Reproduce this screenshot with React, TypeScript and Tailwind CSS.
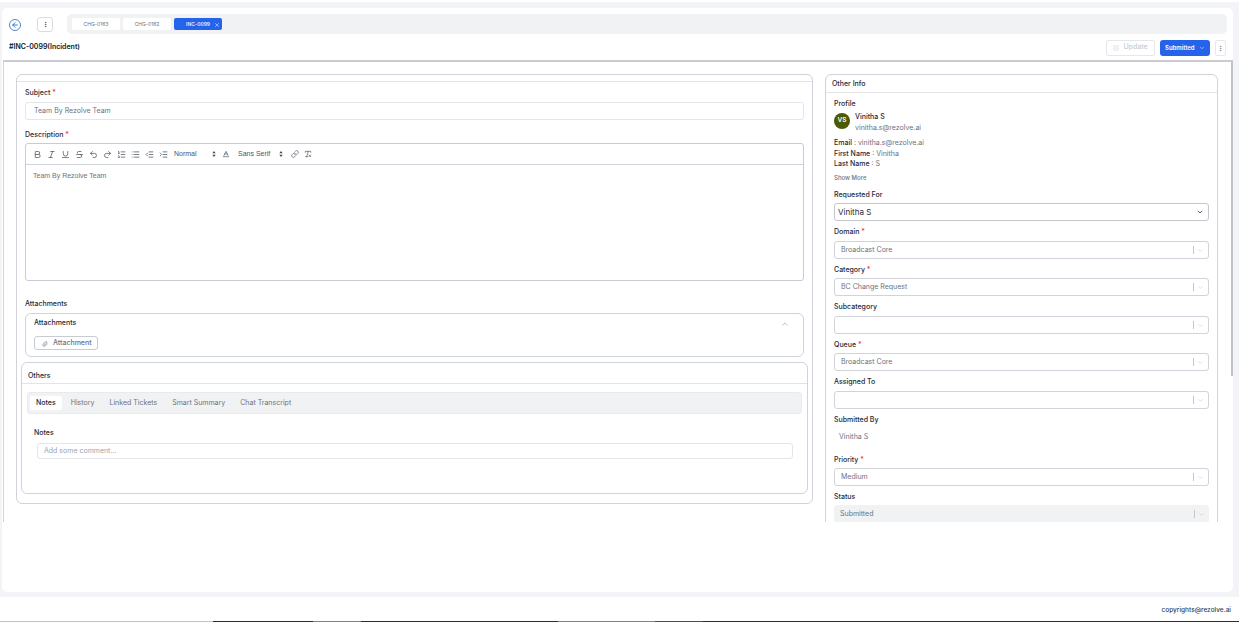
import React from 'react';
import {
  ArrowLeft,
  Bold,
  ChevronDown,
  ChevronUp,
  Baseline,
  EllipsisVertical,
  IndentDecrease,
  IndentIncrease,
  Italic,
  Link,
  List,
  ListOrdered,
  Paperclip,
  Redo2,
  RemoveFormatting,
  SquarePen,
  Strikethrough,
  Underline,
  Undo2,
  X,
} from 'lucide-react';

const Req = () => <span className="text-red-500"> *</span>;

const Label = ({ text, required }: { text: string; required?: boolean }) => (
  <div className="h-[11px] text-[7px] leading-[11px] font-medium text-[#1f2937]">
    {text}
    {required && <Req />}
  </div>
);

// react-select looking control
const SelectBox = ({ value, disabled, tall }: { value?: string; disabled?: boolean; tall?: boolean }) => (
  <div
    className={`flex h-[18px] items-center justify-between rounded-[3px] pl-[6px] pr-[4px] ${tall ? 'mt-[4px]' : 'mt-[3px]'} ${
      disabled ? 'bg-[#f1f2f4]' : 'border border-[#d1d3da] bg-white'
    }`}
  >
    <span className="text-[7px] text-[#6b7280]">{value}</span>
    <span className="flex items-center gap-[3px]">
      <span className="h-[8px] w-px bg-[#c4c6cc]" />
      <ChevronDown className="h-[7px] w-[7px] text-[#c4c6cc]" />
    </span>
  </div>
);

const Field = ({ label, required, value, tall, disabled }: { label: string; required?: boolean; value?: string; tall?: boolean; disabled?: boolean }) => (
  <div className="mt-[5px]">
    <Label text={label} required={required} />
    <SelectBox value={value} tall={tall} disabled={disabled} />
  </div>
);

const PickerArrows = () => (
  <svg viewBox="0 0 8 8" className="h-[8px] w-[8px] text-[#374151]" fill="currentColor">
    <path d="M4 1 5.6 3.2H2.4Z" />
    <path d="M4 7 5.6 4.8H2.4Z" />
  </svg>
);

const tools = [Bold, Italic, Underline, Strikethrough, Undo2, Redo2, ListOrdered, List, IndentDecrease, IndentIncrease];

const Toolbar = () => (
  <div className="flex h-[21px] items-center border-b border-[#d1d3da] pl-[7px] font-['Liberation_Sans',sans-serif] text-[7px] text-[#4b5563]">
    <div className="flex gap-[5px]">
      {tools.map((Icon, i) => (
        <Icon key={i} className="h-[9px] w-[9px] text-[#4b5563]" strokeWidth={2} />
      ))}
    </div>
    <span className="ml-[6px] w-[36px]">Normal</span>
    <PickerArrows />
    <Baseline className="ml-[4px] h-[8px] w-[8px] text-[#4b5563]" />
    <span className="ml-[8px] w-[39px] whitespace-nowrap">Sans Serif</span>
    <PickerArrows />
    <Link className="ml-[6px] h-[8px] w-[8px] text-[#4b5563]" />
    <RemoveFormatting className="ml-[5px] h-[8px] w-[8px] text-[#4b5563]" />
  </div>
);

const tabs = ['Notes', 'History', 'Linked Tickets', 'Smart Summary', 'Chat Transcript'];

const LeftPanel = () => (
  <div className="h-[430px] w-[797px] shrink-0 rounded-[6px] border border-[#d1d3da] bg-white">
    <div className="h-[7px] border-b border-[#e1e3e8]" />
    <div className="px-[8px] pt-[5px]">
      <Label text="Subject" required />
      <div className="mt-[4px] flex h-[18px] items-center rounded-[3px] border border-[#e3e5ea] pl-[8px] pt-[1px] text-[7px] text-[#6b7280]">
        Team By Rezolve Team
      </div>
      <div className="mt-[9px]">
        <Label text="Description" required />
      </div>
      <div className="mt-[3px] h-[138px] rounded-[3px] border border-[#c9cbd2]">
        <Toolbar />
        <div className="pl-[7px] pt-[6px] font-['Liberation_Sans',sans-serif] text-[7px] text-[#6b7280]">Team By Rezolve Team</div>
      </div>
      <div className="mt-[17px]">
        <Label text="Attachments" />
      </div>
      <div className="mt-[4px] h-[44px] rounded-[6px] border border-[#d1d3da] px-[8px]">
        <div className="flex h-[19px] items-center justify-between pr-[6px] text-[7px] font-medium text-[#1f2937]">
          Attachments
          <ChevronUp className="h-[8px] w-[8px] text-[#9ca3af]" />
        </div>
        <div className="mt-[3px] flex h-[14px] w-[64px] items-center gap-[5px] rounded-[3px] border border-[#c9cbd2] pl-[7px] pt-[1px] text-[7px] font-medium text-[#6b7280]">
          <Paperclip className="h-[6px] w-[6px] text-[#6b7280]" />
          Attachment
        </div>
      </div>
    </div>
    <div className="ml-[4px] mt-[5px] h-[132px] w-[787px] rounded-[6px] border border-[#d1d3da]">
      <div className="flex h-[21px] items-center border-b border-[#e1e3e8] pl-[6px] pt-[6px] text-[7px] font-medium text-[#1f2937]">
        Others
      </div>
      <div className="mx-[5px] mt-[8px] flex h-[22px] items-center gap-[3px] rounded-[3px] border border-[#e9eaee] bg-[#f1f2f4] px-[2px]">
        {tabs.map((t, i) => (
          <span
            key={t}
            className={`flex h-[14px] items-center rounded-[2px] px-[6px] text-[7px] ${
              i === 0 ? 'bg-white font-medium text-[#1f2937]' : 'text-[#6b7280]'
            }`}
          >
            {t}
          </span>
        ))}
      </div>
      <div className="pl-[12px] pt-[13px]">
        <Label text="Notes" />
      </div>
      <div className="ml-[15px] mt-[5px] flex h-[16px] w-[756px] items-center rounded-[3px] border border-[#e3e5ea] pl-[6px] pt-[1px] text-[7px] text-[#9ca3af]">
        Add some comment...
      </div>
    </div>
  </div>
);

const Info = ({ k, v }: { k: string; v: string }) => (
  <div className="h-[10.5px] text-[7px] leading-[11px] text-[#6b7280]">
    <span className="font-medium text-[#1f2937]">{k}</span> : {v}
  </div>
);

const RightPanel = () => (
  <div className="h-[470px] w-[393px] shrink-0 rounded-[6px] border border-[#d1d3da] bg-white">
    <div className="flex h-[18px] items-center border-b border-[#e1e3e8] pl-[6px] pt-[1px] text-[7px] font-medium text-[#1f2937]">
      Other Info
    </div>
    <div className="px-[8px] pt-[5px]">
      <Label text="Profile" />
      <div className="mt-[2px] flex gap-[5px]">
        <div className="mt-[2px] flex h-[16px] w-[16px] items-center justify-center rounded-full bg-[#4d5a05] text-[6.5px] font-semibold text-white">
          VS
        </div>
        <div>
          <div className="h-[11px] text-[7px] leading-[11px] font-medium text-[#1f2937]">Vinitha S</div>
          <div className="text-[7px] leading-[11px] text-[#6b7280]">vinitha.s@rezolve.ai</div>
        </div>
      </div>
      <div className="mt-[4px]">
        <Info k="Email" v="vinitha.s@rezolve.ai" />
      </div>
      <Info k="First Name" v="Vinitha" />
      <Info k="Last Name" v="S" />
      <div className="mt-[4px] h-[9px] text-[6px] leading-[9px] font-medium text-[#6b7280]">Show More</div>
      <div className="mt-[7.5px]">
        <Label text="Requested For" />
      </div>
      <div className="mt-[3px] flex h-[18px] items-center justify-between rounded-[3px] border border-[#c4c6cc] pl-[3px] pr-[4px] text-[8px] text-[#1f2937]">
        Vinitha S
        <ChevronDown className="h-[8px] w-[8px] text-[#374151]" strokeWidth={2.5} />
      </div>
      <Field label="Domain" required value="Broadcast Core" tall />
      <Field label="Category" required value="BC Change Request" />
      <Field label="Subcategory" tall />
      <Field label="Queue" required value="Broadcast Core" />
      <Field label="Assigned To" tall />
      <div className="mt-[5px]">
        <Label text="Submitted By" />
      </div>
      <div className="flex h-[24px] items-center pl-[5px] pt-[1px] text-[7px] text-[#6b7280]">Vinitha S</div>
      <Field label="Priority" required value="Medium" />
      <Field label="Status" value="Submitted" disabled />
    </div>
  </div>
);

export default function App() {
  return (
    <div className="flex h-[622px] w-[1239px] flex-col overflow-hidden bg-[#f3f4f8] font-['Inter',sans-serif]">
      <div className="h-[2px] bg-white" />
      <div className="mx-[2px] mt-[6px] h-[584px] w-[1231px] rounded-[5px] bg-white">
        {/* tab strip */}
        <div className="flex h-[26px] items-end pl-[7px] pr-[6px]">
          <div className="mb-[3px] flex h-[12px] w-[12px] items-center justify-center rounded-full border border-[#4a86c8]">
            <ArrowLeft className="h-[8px] w-[8px] text-[#3b7cc4]" strokeWidth={3} />
          </div>
          <div className="mb-[2px] ml-[16px] flex h-[15px] w-[16px] items-center justify-center rounded-[3px] border border-[#d9dbe1]">
            <EllipsisVertical className="h-[7px] w-[7px] text-[#374151]" />
          </div>
          <div className="ml-[14px] flex h-[20px] flex-1 items-center gap-[3px] rounded-[5px] bg-[#f1f2f4] pl-[5px]">
            <span className="flex h-[12px] w-[48px] items-center justify-center rounded-[2px] bg-white pt-[1px] text-[5px] text-[#6b7280]">CHG-0163</span>
            <span className="flex h-[12px] w-[48px] items-center justify-center rounded-[2px] bg-white pt-[1px] text-[5px] text-[#6b7280]">CHG-0162</span>
            <span className="flex h-[12px] w-[48px] items-center justify-center gap-[4px] rounded-[2px] bg-[#2563eb] pl-[10px] pt-[1px] text-[5px] font-medium text-white">
              INC-0099
              <X className="h-[6px] w-[6px]" />
            </span>
          </div>
        </div>
        {/* title row */}
        <div className="mt-[6px] flex h-[16px] justify-between pl-[7px] pr-[7px]">
          <div className="text-[7px] leading-[14px] font-semibold text-[#111827]">#INC-0099(Incident)</div>
          <div className="flex items-center">
            <div className="flex h-[16px] w-[49px] items-center justify-center gap-[4px] rounded-[2px] border border-[#e5e7eb] pb-[1px] text-[7px] font-medium text-[#c9ccd2]">
              <SquarePen className="h-[6px] w-[6px]" />
              Update
            </div>
            <div className="ml-[5px] flex h-[16px] w-[50px] items-center gap-[4px] rounded-[3px] bg-[#2563eb] pb-[1px] pl-[5px] text-[6px] font-semibold text-white">
              Submitted
              <ChevronDown className="h-[6px] w-[6px]" />
            </div>
            <div className="ml-[5px] flex h-[16px] w-[11px] items-center justify-center rounded-[2px] border border-[#e5e7eb]">
              <EllipsisVertical className="h-[7px] w-[7px] text-[#6b7280]" />
            </div>
          </div>
        </div>
        {/* form area, cut off by the scroller */}
        <div className="ml-px mt-[4px] flex h-[462px] w-[1230px] border-t-2 border-[#c9cbd0]">
          <div className="flex h-full flex-1 gap-[12px] overflow-hidden border-l border-[#d1d3da] pl-[12px] pt-[12px]">
            <LeftPanel />
            <RightPanel />
          </div>
          <div className="w-[2px]">
            <div className="h-[314px] bg-[#c0c2c7]" />
          </div>
        </div>
      </div>
      <div className="mt-[5px] flex h-[24px] items-center justify-end bg-white pr-[8px] pt-[3px] text-[6.5px] font-medium text-[#374151]">
        copyrights@rezolve.ai
      </div>
      <div className="flex h-px">
        <div className="w-[213px] bg-[#c0c0c0]" />
        <div className="w-[100px] bg-[#22303a]" />
        <div className="w-[48px] bg-[#b5763a]" />
        <div className="w-[197px] bg-[#22303a]" />
        <div className="w-[97px] bg-[#b5763a]" />
        <div className="w-[48px] bg-[#4b5055]" />
        <div className="flex-1 bg-[#22303a]" />
      </div>
    </div>
  );
}
